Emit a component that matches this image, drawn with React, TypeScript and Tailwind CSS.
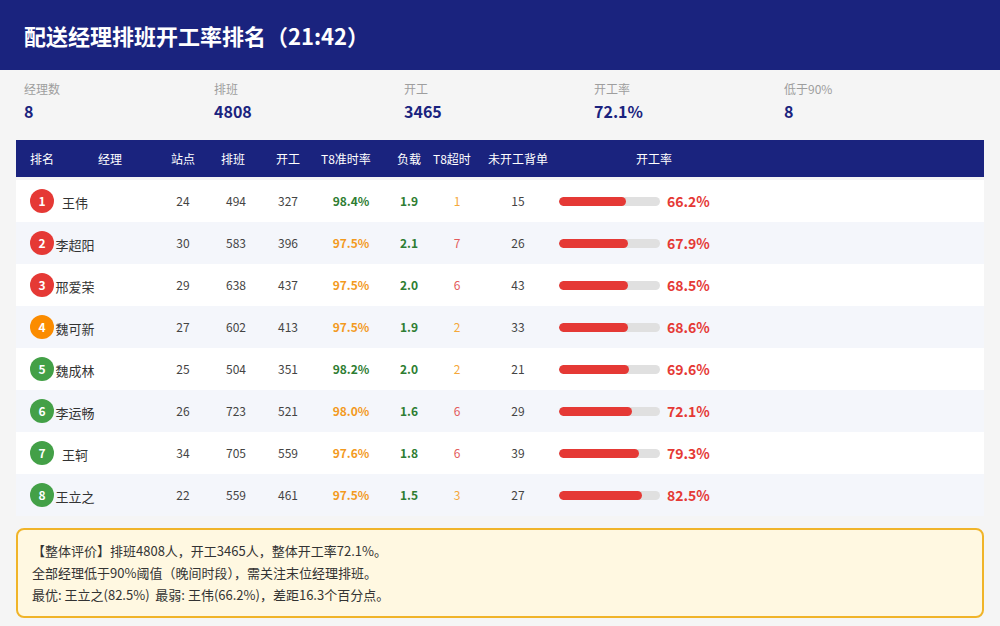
const rows = [
  { rank: 1, name: "王伟", site: 24, sched: 494, work: 327, ontime: "98.4%", ontimeGood: true, load: "1.9", late: 1, backlog: 15, rate: 66.2 },
  { rank: 2, name: "李超阳", site: 30, sched: 583, work: 396, ontime: "97.5%", ontimeGood: false, load: "2.1", late: 7, backlog: 26, rate: 67.9 },
  { rank: 3, name: "邢爱荣", site: 29, sched: 638, work: 437, ontime: "97.5%", ontimeGood: false, load: "2.0", late: 6, backlog: 43, rate: 68.5 },
  { rank: 4, name: "魏可新", site: 27, sched: 602, work: 413, ontime: "97.5%", ontimeGood: false, load: "1.9", late: 2, backlog: 33, rate: 68.6 },
  { rank: 5, name: "魏成林", site: 25, sched: 504, work: 351, ontime: "98.2%", ontimeGood: true, load: "2.0", late: 2, backlog: 21, rate: 69.6 },
  { rank: 6, name: "李运畅", site: 26, sched: 723, work: 521, ontime: "98.0%", ontimeGood: false, load: "1.6", late: 6, backlog: 29, rate: 72.1 },
  { rank: 7, name: "王轲", site: 34, sched: 705, work: 559, ontime: "97.6%", ontimeGood: false, load: "1.8", late: 6, backlog: 39, rate: 79.3 },
  { rank: 8, name: "王立之", site: 22, sched: 559, work: 461, ontime: "97.5%", ontimeGood: false, load: "1.5", late: 3, backlog: 27, rate: 82.5 },
];

const stats = [
  { label: "经理数", value: "8" },
  { label: "排班", value: "4808" },
  { label: "开工", value: "3465" },
  { label: "开工率", value: "72.1%" },
  { label: "低于90%", value: "8" },
];

function badgeColor(rank: number) {
  if (rank <= 3) return "bg-[#e53935]";
  if (rank === 4) return "bg-[#fb8c00]";
  return "bg-[#43a047]";
}

const bodyCols = "grid grid-cols-[39px_40px_58px_60px_46px_58px_68px_48px_48px_74px_1fr] items-center";

export default function App() {
  return (
    <div
      className="w-[1000px] h-[626px] bg-[#f5f5f5] overflow-hidden"
      style={{ fontFamily: '"Noto Sans CJK SC", "Noto Sans", sans-serif' }}
    >
      {/* Title bar */}
      <div className="h-[70px] bg-[#1a237e] flex items-center px-6">
        <h1 className="text-[22px] font-bold text-white leading-none">配送经理排班开工率排名（21:42）</h1>
      </div>

      {/* Summary stats */}
      <div className="h-[70px] px-6 pt-[10px] grid grid-cols-[190px_190px_190px_190px_1fr]">
        {stats.map((s) => (
          <div key={s.label} className="flex flex-col">
            <span className="text-[12px] leading-[18px] text-[#9e9e9e]">{s.label}</span>
            <span className="text-[16px] leading-[24px] font-bold text-[#1a237e] mt-[1px]">{s.value}</span>
          </div>
        ))}
      </div>

      {/* Table */}
      <div className="mx-4">
        <div className="h-[37px] bg-[#1a237e] text-white text-[12px] grid grid-cols-[64px_80px_50px_55px_45px_75px_43px_52px_80px_1fr] items-center whitespace-nowrap">
          <span className="pl-[14px]">排名</span>
          <span className="pl-[18px]">经理</span>
          <span className="pl-[11px]">站点</span>
          <span className="pl-[11px]">排班</span>
          <span className="pl-[11px]">开工</span>
          <span className="pl-[11px]">T8准时率</span>
          <span className="pl-[12px]">负载</span>
          <span className="pl-[5px]">T8超时</span>
          <span className="pl-[8px]">未开工背单</span>
          <span className="pl-[76px]">开工率</span>
        </div>

        <div className="mt-[3px]">
          {rows.map((r, i) => (
            <div
              key={r.rank}
              className={`${bodyCols} h-[42px] text-[12px] text-[#444] ${i % 2 === 0 ? "bg-white" : "bg-[#f4f6fb]"}`}
            >
              <div className="pl-[14px] flex items-center">
                <span
                  className={`w-[24px] h-[24px] rounded-full ${badgeColor(r.rank)} text-white text-[12px] font-bold flex items-center justify-center`}
                >
                  {r.rank}
                </span>
              </div>
              <span className="text-center text-[13px] text-[#333] mt-[3px] whitespace-nowrap">{r.name}</span>
              <span />
              <span className="text-center">{r.site}</span>
              <span className="text-center">{r.sched}</span>
              <span className="text-center">{r.work}</span>
              <span className={`text-center font-bold ${r.ontimeGood ? "text-[#2e7d32]" : "text-[#f39a1e]"}`}>
                {r.ontime}
              </span>
              <span className="text-center font-bold text-[#2e7d32]">{r.load}</span>
              <span className={`text-center ${r.late >= 5 ? "text-[#e35b5b]" : "text-[#f5a83a]"}`}>{r.late}</span>
              <span className="text-center">{r.backlog}</span>
              <div className="pl-[4px] flex items-center gap-[7px]">
                <div className="w-[101px] h-[9px] rounded-full bg-[#e0e0e0] overflow-hidden">
                  <div className="h-full rounded-full bg-[#e53935]" style={{ width: `${r.rate}%` }} />
                </div>
                <span className="text-[14px] font-bold text-[#e53935]">{r.rate.toFixed(1)}%</span>
              </div>
            </div>
          ))}
        </div>

        {/* Overall evaluation */}
        <div className="mt-3 border-2 border-[#f0b429] bg-[#fff8e1] rounded-lg px-[14px] py-[10px] text-[13px] leading-[22px] text-[#333]">
          <p>【整体评价】排班4808人，开工3465人，整体开工率72.1%。</p>
          <p>全部经理低于90%阈值（晚间时段），需关注末位经理排班。</p>
          <p>最优: 王立之(82.5%)&nbsp; 最弱: 王伟(66.2%)，差距16.3个百分点。</p>
        </div>
      </div>
    </div>
  );
}
